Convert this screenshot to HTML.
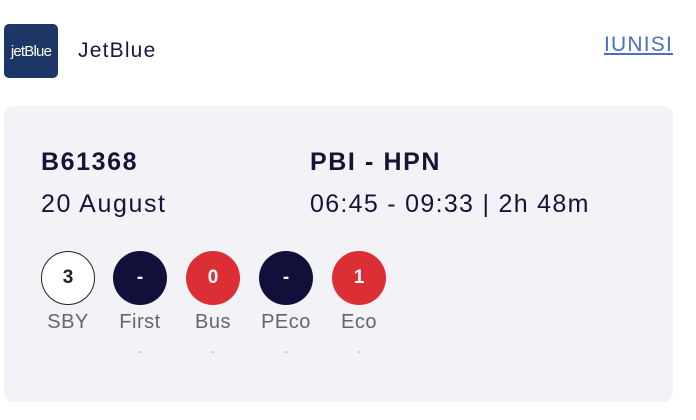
<!DOCTYPE html>
<html><head><meta charset="utf-8"><style>
body{margin:0;width:696px;height:420px;background:#fff;font-family:"Liberation Sans",sans-serif;position:relative;overflow:hidden}
.logo{position:absolute;left:4px;top:24px;width:54px;height:54px;border-radius:5px;background:#1c3766;color:#fff;font-size:15px;letter-spacing:-0.8px;display:flex;align-items:center;justify-content:center}
.name{position:absolute;left:78px;top:39px;font-size:21px;color:#1a1740;letter-spacing:1.2px}
.link{position:absolute;left:604px;top:33px;font-size:21px;color:#4a6fc7;text-decoration:underline;letter-spacing:1.2px}
.card{position:absolute;left:4px;top:106px;width:669px;height:296px;border-radius:10px;background:#f3f3f7}
.t{position:absolute;color:#141437;letter-spacing:1.6px}
.c{position:absolute;top:251px;width:54px;height:54px;border-radius:50%;box-sizing:border-box;display:flex;align-items:center;justify-content:center;font-size:19px;color:#fff;font-weight:bold}
.l{position:absolute;top:311px;width:80px;text-align:center;font-size:20px;color:#666;letter-spacing:0.5px}
.d{position:absolute;top:344px;width:80px;text-align:center;font-size:12px;color:#aaa}
</style></head><body>
<div class="logo">jetBlue</div>
<div class="name">JetBlue</div>
<div class="link">IUNISI</div>
<div class="card"></div>
<div class="t" style="left:41px;top:148px;font-size:25px;font-weight:bold">B61368</div>
<div class="t" style="left:41px;top:190px;font-size:25px">20 August</div>
<div class="t" style="left:310px;top:148px;font-size:25px;font-weight:bold">PBI - HPN</div>
<div class="t" style="left:310px;top:190px;font-size:25px;letter-spacing:1.3px">06:45 - 09:33 | 2h 48m</div>
<div class="c" style="left:41px;background:#fff;border:1.5px solid #222;color:#222">3</div>
<div class="c" style="left:113px;background:#10103a">-</div>
<div class="c" style="left:186px;background:#dc2f35">0</div>
<div class="c" style="left:259px;background:#10103a">-</div>
<div class="c" style="left:332px;background:#dc2f35">1</div>
<div class="l" style="left:28px">SBY</div>
<div class="l" style="left:100px">First</div>
<div class="l" style="left:173px">Bus</div>
<div class="l" style="left:246px">PEco</div>
<div class="l" style="left:319px">Eco</div>
<div class="d" style="left:100px">-</div>
<div class="d" style="left:173px">-</div>
<div class="d" style="left:246px">-</div>
<div class="d" style="left:319px">-</div>
</body></html>
